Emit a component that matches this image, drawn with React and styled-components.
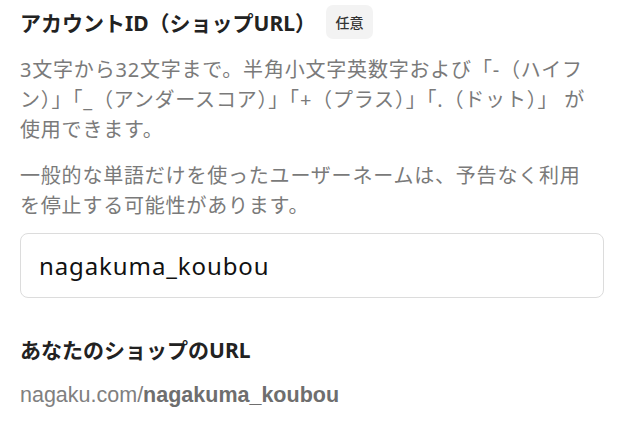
import React from 'react';
import styled, { createGlobalStyle } from 'styled-components';

const GlobalStyle = createGlobalStyle`
  body {
    margin: 0;
    background: #fff;
    font-family: "Noto Sans", "Noto Sans CJK JP", sans-serif;
  }
`;

const Page = styled.div`
  width: 624px;
  padding: 0 20px;
  box-sizing: border-box;
`;

const LabelRow = styled.div`
  display: flex;
  align-items: center;
  gap: 10px;
  height: 44px;
`;

const Label = styled.div`
  font-size: 21px;
  font-weight: 700;
  color: #222;
`;

const Badge = styled.span`
  display: inline-flex;
  align-items: center;
  justify-content: center;
  width: 47px;
  height: 34px;
  border-radius: 7px;
  background: #f3f3f3;
  color: #333;
  font-size: 14px;
  font-weight: 500;
`;

const Note = styled.p`
  margin: ${(p) => p.top || 0}px 0 0;
  font-size: 20px;
  line-height: 30px;
  letter-spacing: 0.8px;
  color: #7a7a7a;
`;

const Field = styled.input`
  display: block;
  width: 100%;
  height: 65px;
  margin-top: 12px;
  padding: 0 18px;
  box-sizing: border-box;
  border: 1px solid #dcdcdc;
  border-radius: 8px;
  font-family: inherit;
  font-size: 24px;
  letter-spacing: 0.9px;
  color: #111;
  outline: none;
`;

const Heading = styled.div`
  margin-top: 36px;
  font-size: 21px;
  font-weight: 700;
  color: #222;
`;

const Url = styled.div`
  margin-top: 19px;
  font-family: "Liberation Sans", "Noto Sans CJK JP", sans-serif;
  font-size: 21.5px;
  color: #808080;
  b {
    font-weight: 700;
    color: #6e6e6e;
  }
`;

export default function App() {
  return (
    <Page>
      <GlobalStyle />
      <LabelRow>
        <Label>アカウントID（ショップURL）</Label>
        <Badge>任意</Badge>
      </LabelRow>
      <Note top={11}>
        3文字から32文字まで。半角小文字英数字および「-（ハイフン）」「_（アンダースコア）」「+（プラス）」「.（ドット）」 が使用できます。
      </Note>
      <Note top={16}>
        一般的な単語だけを使ったユーザーネームは、予告なく利用
        <br />
        を停止する可能性があります。
      </Note>
      <Field defaultValue="nagakuma_koubou" />
      <Heading>あなたのショップのURL</Heading>
      <Url>
        nagaku.com/<b>nagakuma_koubou</b>
      </Url>
    </Page>
  );
}
